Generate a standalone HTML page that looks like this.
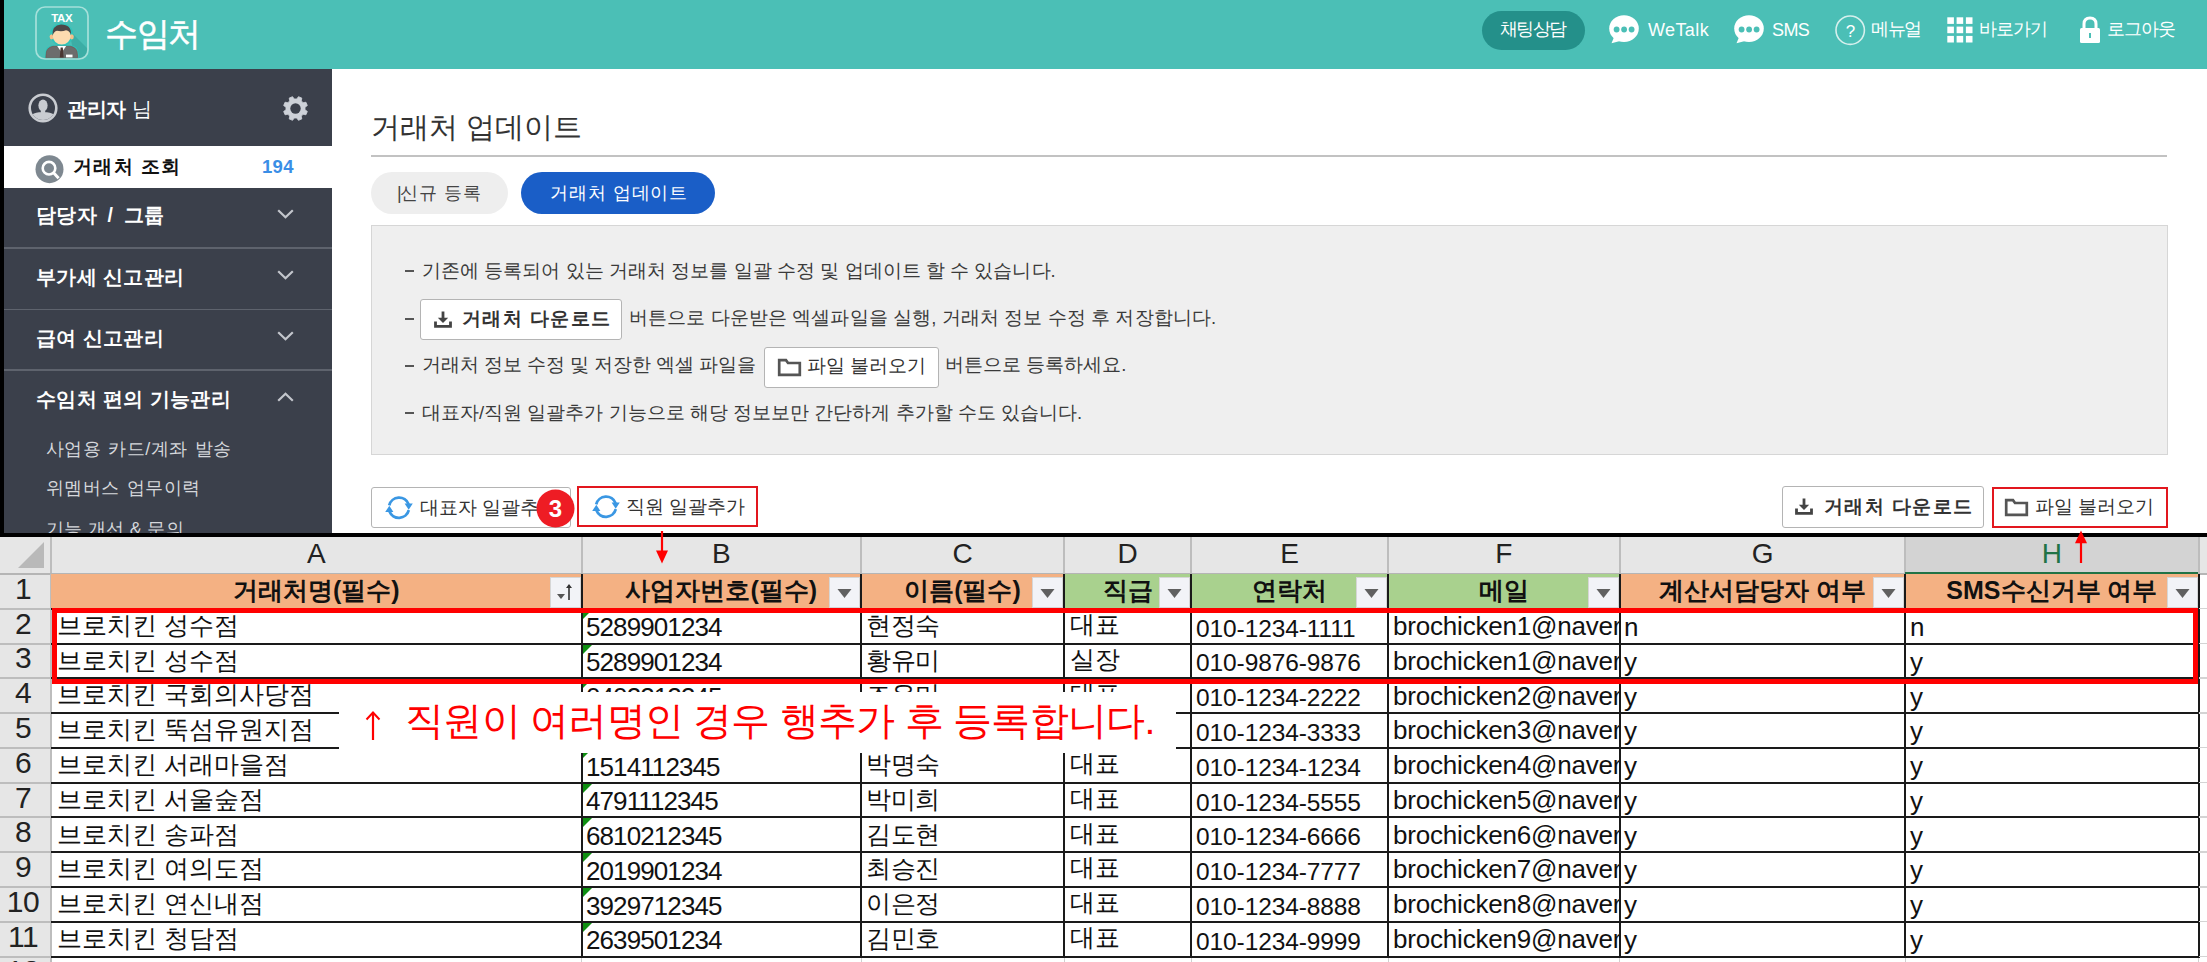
<!DOCTYPE html><html><head><meta charset="utf-8"><style>
html,body{margin:0;padding:0;}
body{width:2207px;height:962px;overflow:hidden;position:relative;background:#fff;font-family:'Liberation Sans', sans-serif;}
.t{position:absolute;white-space:nowrap;}
.b{position:absolute;box-sizing:border-box;}
svg{position:absolute;overflow:visible;}
</style></head><body>
<div class="b" style="left:0px;top:0px;width:4px;height:533px;background:#000"></div>
<div class="b" style="left:4px;top:0px;width:2203px;height:69px;background:#4bbfb6"></div>
<svg style="left:35px;top:6px" width="54" height="54" viewBox="0 0 54 54">
<defs><clipPath id="lc"><rect x="1" y="1" width="52" height="52" rx="9"/></clipPath></defs>
<g clip-path="url(#lc)"><rect x="0" y="0" width="54" height="54" fill="#4bbfb6"/>
<polygon points="34,24 54,44 54,54 40,54" fill="#3cada5"/></g>
<rect x="1" y="1" width="52" height="52" rx="9" fill="none" stroke="#a5e0da" stroke-width="1.7"/>
<text x="26.8" y="16.3" font-family="Liberation Sans" font-weight="bold" font-size="11.5" fill="#fff" text-anchor="middle" letter-spacing="-0.3">TAX</text>
<path d="M9.6,52 L10.5,45 Q11.5,40.5 17,39.2 L36,39.2 Q42,40.5 43,45 L44,52 Z" fill="#30c3ba"/>
<ellipse cx="26.7" cy="28.5" rx="11.6" ry="11.2" fill="#30c3ba"/>
<path d="M10.8,51.6 L11.5,45.5 Q12.5,41.5 18,40.3 L35.5,40.3 Q41,41.5 42,45.5 L42.8,51.6 Z" fill="#6c6c6c" stroke="#7a4a45" stroke-width="0.6"/>
<path d="M22.2,40 L26.7,46.5 L31.2,40 Z" fill="#fff"/>
<path d="M25.6,41.5 L27.8,41.5 L28.6,51.5 L24.8,51.5 Z" fill="#4a3632"/>
<rect x="31" y="48.6" width="6.5" height="2.8" fill="#fff"/>
<ellipse cx="16.6" cy="30.8" rx="2" ry="2.6" fill="#f5c08a"/>
<ellipse cx="36.8" cy="30.8" rx="2" ry="2.6" fill="#f5c08a"/>
<ellipse cx="26.7" cy="30" rx="9" ry="8.6" fill="#fcdbb0"/>
<path d="M17.5,30 Q16.5,19.5 26,18.6 Q36.5,18.5 36,29 Q35,25 31,24.2 Q27,26 22,24.8 Q18.6,25.5 17.5,30 Z" fill="#4d4747"/>
</svg>
<div class="t" style="left:105px;top:17.4px;font-size:33px;line-height:33px;color:#fff;font-weight:normal;letter-spacing:-1.5px;-webkit-text-stroke:0.5px #fff">수임처</div>
<div class="b" style="left:1482px;top:11px;width:103px;height:39px;background:#24908a;border-radius:20px"></div>
<div class="t" style="left:1500px;top:20.9px;font-size:17.5px;line-height:17.5px;color:#fff;font-weight:normal;letter-spacing:-1.6px">채팅상담</div>
<svg style="left:1609px;top:15px" width="31" height="29" viewBox="0 0 31 29">
<ellipse cx="15" cy="13.6" rx="14.8" ry="13.4" fill="#fff"/>
<path d="M5.5,21 L2.5,28.3 L13,25.5 Z" fill="#fff"/>
<circle cx="7.6" cy="14.5" r="2.9" fill="#4bbfb6"/><circle cx="15.1" cy="14.5" r="2.9" fill="#4bbfb6"/><circle cx="22.6" cy="14.5" r="2.9" fill="#4bbfb6"/>
</svg>
<div class="t" style="left:1648px;top:20.7px;font-size:18px;line-height:18px;color:#fbfefe;font-weight:normal;letter-spacing:0.4px">WeTalk</div>
<svg style="left:1734px;top:15px" width="31" height="29" viewBox="0 0 31 29">
<ellipse cx="15" cy="13.6" rx="14.8" ry="13.4" fill="#fff"/>
<path d="M5.5,21 L2.5,28.3 L13,25.5 Z" fill="#fff"/>
<circle cx="7.6" cy="14.5" r="2.9" fill="#4bbfb6"/><circle cx="15.1" cy="14.5" r="2.9" fill="#4bbfb6"/><circle cx="22.6" cy="14.5" r="2.9" fill="#4bbfb6"/>
</svg>
<div class="t" style="left:1772px;top:20.7px;font-size:18px;line-height:18px;color:#fff;font-weight:normal;letter-spacing:-0.6px">SMS</div>
<svg style="left:1835px;top:15px" width="31" height="31" viewBox="0 0 31 31">
<circle cx="15.2" cy="15.2" r="14.2" fill="none" stroke="#d6f0ed" stroke-width="1.6"/>
<text x="15.5" y="21.5" font-family="Liberation Sans" font-size="17" fill="#fff" text-anchor="middle">?</text></svg>
<div class="t" style="left:1871px;top:20.6px;font-size:17.5px;line-height:17.5px;color:#fff;font-weight:normal;letter-spacing:-1.4px">메뉴얼</div>
<svg style="left:1947px;top:17px" width="26" height="26" viewBox="0 0 26 26"><rect x="0.3" y="0.3" width="6.6" height="6.6" fill="#fff"/><rect x="0.3" y="9.6" width="6.6" height="6.6" fill="#fff"/><rect x="0.3" y="18.9" width="6.6" height="6.6" fill="#fff"/><rect x="9.6" y="0.3" width="6.6" height="6.6" fill="#fff"/><rect x="9.6" y="9.6" width="6.6" height="6.6" fill="#fff"/><rect x="9.6" y="18.9" width="6.6" height="6.6" fill="#fff"/><rect x="18.9" y="0.3" width="6.6" height="6.6" fill="#fff"/><rect x="18.9" y="9.6" width="6.6" height="6.6" fill="#fff"/><rect x="18.9" y="18.9" width="6.6" height="6.6" fill="#fff"/></svg>
<div class="t" style="left:1979px;top:20.6px;font-size:17.5px;line-height:17.5px;color:#fff;font-weight:normal;letter-spacing:-0.9px">바로가기</div>
<svg style="left:2079px;top:16px" width="22" height="28" viewBox="0 0 22 28">
<path d="M5,12 L5,8 Q5,2 11,2 Q17,2 17,8 L17,12" fill="none" stroke="#fff" stroke-width="3"/>
<rect x="1" y="12" width="20" height="15" rx="1.5" fill="#fff"/>
<rect x="10" y="17" width="2" height="5" fill="#4bbfb6"/></svg>
<div class="t" style="left:2107px;top:20.6px;font-size:17.5px;line-height:17.5px;color:#fff;font-weight:normal;letter-spacing:-0.9px">로그아웃</div>
<div class="b" style="left:4px;top:69px;width:328px;height:464px;background:#3b404b"></div>
<svg style="left:27px;top:92px" width="32" height="32" viewBox="0 0 32 32">
<circle cx="16" cy="16" r="13.3" fill="none" stroke="#c9ccd1" stroke-width="2.6"/>
<clipPath id="pc"><circle cx="16" cy="16" r="12"/></clipPath>
<g clip-path="url(#pc)"><ellipse cx="16" cy="13.6" rx="4.6" ry="6" fill="#c9ccd1"/><rect x="13.8" y="17" width="4.4" height="4" fill="#c9ccd1"/><path d="M3,32 L3.5,25 Q5,21 12,20.3 L20,20.3 Q27,21 28.5,25 L29,32 Z" fill="#c9ccd1"/></g></svg>
<div class="t" style="left:67px;top:99.4px;font-size:20px;line-height:20px;color:#fff;font-weight:bold;letter-spacing:-0.5px">관리자</div>
<div class="t" style="left:132px;top:99.4px;font-size:20px;line-height:20px;color:#fff;font-weight:normal;">님</div>
<svg style="left:283px;top:95.6px" width="25" height="25" viewBox="0 0 25 25">
<polygon points="13.75,2.98 15.45,0.66 18.78,2.04 18.34,4.88 20.12,6.66 22.96,6.22 24.34,9.55 22.02,11.25 22.02,13.75 24.34,15.45 22.96,18.78 20.12,18.34 18.34,20.12 18.78,22.96 15.45,24.34 13.75,22.02 11.25,22.02 9.55,24.34 6.22,22.96 6.66,20.12 4.88,18.34 2.04,18.78 0.66,15.45 2.98,13.75 2.98,11.25 0.66,9.55 2.04,6.22 4.88,6.66 6.66,4.88 6.22,2.04 9.55,0.66 11.25,2.98" fill="#cdd1d8" stroke="#cdd1d8" stroke-width="0.8" stroke-linejoin="round"/><circle cx="12.5" cy="12.5" r="5.2" fill="#3b404b"/></svg>
<div class="b" style="left:4px;top:146px;width:328px;height:41.5px;background:#fff"></div>
<svg style="left:35px;top:155px" width="29" height="29" viewBox="0 0 29 29">
<circle cx="14.5" cy="14.2" r="14" fill="#7e8890"/>
<circle cx="14" cy="13.2" r="6.3" fill="none" stroke="#fff" stroke-width="2.6"/>
<line x1="18.6" y1="17.8" x2="23.6" y2="23.2" stroke="#fff" stroke-width="3"/></svg>
<div class="t" style="left:73px;top:158.0px;font-size:18.5px;line-height:18.5px;color:#111;font-weight:bold;letter-spacing:1.4px">거래처 조회</div>
<div class="t" style="left:262px;top:158.3px;font-size:18.5px;line-height:18.5px;color:#3a8ee6;font-weight:bold;letter-spacing:0.3px">194</div>
<div class="t" style="left:36px;top:206.4px;font-size:19.5px;line-height:19.5px;color:#fff;font-weight:bold;letter-spacing:0.4px;word-spacing:4.5px">담당자 / 그룹</div>
<svg style="left:277px;top:208.5px" width="17" height="10" viewBox="0 0 17 10"><polyline points="1.2,1.2 8.5,8.3 15.8,1.2" fill="none" stroke="#c3c6cc" stroke-width="2.2"/></svg>
<div class="b" style="left:4px;top:247.4px;width:328px;height:1.1999999999999886px;background:#5e636d"></div>
<div class="t" style="left:36px;top:267.5px;font-size:19.5px;line-height:19.5px;color:#fff;font-weight:bold;letter-spacing:0.4px;word-spacing:0">부가세 신고관리</div>
<svg style="left:277px;top:269.6px" width="17" height="10" viewBox="0 0 17 10"><polyline points="1.2,1.2 8.5,8.3 15.8,1.2" fill="none" stroke="#c3c6cc" stroke-width="2.2"/></svg>
<div class="b" style="left:4px;top:308.6px;width:328px;height:1.1999999999999886px;background:#5e636d"></div>
<div class="t" style="left:36px;top:328.7px;font-size:19.5px;line-height:19.5px;color:#fff;font-weight:bold;letter-spacing:0.4px;word-spacing:0">급여 신고관리</div>
<svg style="left:277px;top:330.8px" width="17" height="10" viewBox="0 0 17 10"><polyline points="1.2,1.2 8.5,8.3 15.8,1.2" fill="none" stroke="#c3c6cc" stroke-width="2.2"/></svg>
<div class="b" style="left:4px;top:369.40000000000003px;width:328px;height:1.1999999999999886px;background:#5e636d"></div>
<div class="t" style="left:36px;top:389.5px;font-size:19.5px;line-height:19.5px;color:#fff;font-weight:bold;letter-spacing:0.4px;word-spacing:0">수임처 편의 기능관리</div>
<svg style="left:277px;top:391.6px" width="17" height="10" viewBox="0 0 17 10"><polyline points="1.2,8.8 8.5,1.7 15.8,8.8" fill="none" stroke="#c3c6cc" stroke-width="2.2"/></svg>
<div class="t" style="left:46px;top:440.3px;font-size:18px;line-height:18px;color:#d6d8dc;font-weight:normal;letter-spacing:0.45px;word-spacing:1.5px">사업용 카드/계좌 발송</div>
<div class="t" style="left:46px;top:479.1px;font-size:18px;line-height:18px;color:#d6d8dc;font-weight:normal;letter-spacing:0.45px;word-spacing:1.5px">위멤버스 업무이력</div>
<div class="t" style="left:46px;top:520.1px;font-size:18px;line-height:18px;color:#d6d8dc;font-weight:normal;letter-spacing:0.3px;word-spacing:0px">기능 개선 &amp; 문의</div>
<div class="b" style="left:4px;top:533px;width:328px;height:4px;background:#000"></div>
<div class="t" style="left:370.5px;top:112.7px;font-size:29px;line-height:29px;color:#333;font-weight:normal;letter-spacing:0px">거래처 업데이트</div>
<div class="b" style="left:371px;top:154.6px;width:1796px;height:2.200000000000017px;background:#c2c2c2"></div>
<div class="b" style="left:371px;top:172px;width:137px;height:42px;background:#eeeeee;border-radius:21px"></div>
<div class="t" style="left:397px;top:183.6px;font-size:18px;line-height:18px;color:#444;font-weight:normal;letter-spacing:1px"><span style="font-weight:normal;letter-spacing:-2px">|</span>신규 등록</div>
<div class="b" style="left:521px;top:172px;width:194px;height:42px;background:#1a5ec7;border-radius:21px"></div>
<div class="t" style="left:550px;top:183.6px;font-size:18px;line-height:18px;color:#fff;font-weight:normal;letter-spacing:0.9px">거래처 업데이트</div>
<div class="b" style="left:371px;top:225px;width:1796.5px;height:230px;background:#efefef;border:1.5px solid #d6d6d6"></div>
<div class="t" style="left:405px;top:261.5px;font-size:18.5px;line-height:18.5px;color:#3a3a3a;font-weight:normal;letter-spacing:0.05px"><span style="margin-left:17px"></span>기존에 등록되어 있는 거래처 정보를 일괄 수정 및 업데이트 할 수 있습니다.</div>
<div class="b" style="left:405px;top:270px;width:8.5px;height:2px;background:#555"></div>
<div class="b" style="left:405px;top:318px;width:8.5px;height:2px;background:#555"></div>
<div class="b" style="left:405px;top:365px;width:8.5px;height:2px;background:#555"></div>
<div class="b" style="left:405px;top:412px;width:8.5px;height:2px;background:#555"></div>
<div class="b" style="left:420px;top:298.7px;width:202px;height:41.60000000000002px;background:#fff;border:1.6px solid #b4b4b4;border-radius:3px"></div>
<svg style="left:434px;top:311px" width="18" height="17" viewBox="0 0 18 17">
<line x1="9" y1="0.5" x2="9" y2="8" stroke="#444" stroke-width="2.8"/>
<polygon points="3.8,6.8 14.2,6.8 9,12" fill="#444"/>
<polyline points="1.5,10.5 1.5,15.3 16.5,15.3 16.5,10.5" fill="none" stroke="#444" stroke-width="2.8"/></svg>
<div class="t" style="left:462px;top:309.0px;font-size:19px;line-height:19px;color:#333;font-weight:bold;letter-spacing:1.4px">거래처 다운로드</div>
<div class="t" style="left:629px;top:309.0px;font-size:18.5px;line-height:18.5px;color:#3a3a3a;font-weight:normal;letter-spacing:0.1px">버튼으로 다운받은 엑셀파일을 실행, 거래처 정보 수정 후 저장합니다.</div>
<div class="t" style="left:405px;top:356.0px;font-size:18.5px;line-height:18.5px;color:#3a3a3a;font-weight:normal;letter-spacing:-0.05px"><span style="margin-left:17px"></span>거래처 정보 수정 및 저장한 엑셀 파일을</div>
<div class="b" style="left:763.7px;top:347.2px;width:175.29999999999995px;height:41.19999999999999px;background:#fff;border:1.6px solid #b4b4b4;border-radius:3px"></div>
<svg style="left:778px;top:359px" width="23" height="17" viewBox="0 0 23 17">
<path d="M1.2,15.8 L1.2,1.2 L8,1.2 L10,4 L21.8,4 L21.8,15.8 Z" fill="none" stroke="#555" stroke-width="2.7"/>
<line x1="1.2" y1="6.2" x2="21.8" y2="6.2" stroke="#555" stroke-width="0"/></svg>
<div class="t" style="left:807px;top:357.0px;font-size:18.5px;line-height:18.5px;color:#333;font-weight:normal;">파일 불러오기</div>
<div class="t" style="left:945px;top:356.0px;font-size:18.5px;line-height:18.5px;color:#3a3a3a;font-weight:normal;">버튼으로 등록하세요.</div>
<div class="t" style="left:405px;top:403.5px;font-size:18.5px;line-height:18.5px;color:#3a3a3a;font-weight:normal;letter-spacing:0.02px"><span style="margin-left:17px"></span>대표자/직원 일괄추가 기능으로 해당 정보보만 간단하게 추가할 수도 있습니다.</div>
<div class="b" style="left:371.4px;top:487px;width:199.39999999999998px;height:41px;background:#fff;border:1.6px solid #b4b4b4;border-radius:3px"></div>
<svg style="left:385px;top:495px" width="28" height="26" viewBox="0 0 28 26">
<path d="M4.2,10.3 A10.2,10.2 0 0 1 23.6,9.2" fill="none" stroke="#3a97e3" stroke-width="2.8"/>
<polygon points="19.6,8.6 27.8,8.6 23.7,14.8" fill="#3a97e3"/>
<path d="M23.8,15.2 A10.2,10.2 0 0 1 4.4,16.3" fill="none" stroke="#3a97e3" stroke-width="2.8"/>
<polygon points="0.2,17 8.4,17 4.3,10.8" fill="#3a97e3"/></svg>
<div class="t" style="left:420px;top:498.5px;font-size:18.5px;line-height:18.5px;color:#333;font-weight:normal;">대표자 일괄추가</div>
<div class="b" style="left:577.4px;top:486px;width:181.0px;height:40.700000000000045px;background:#fff;border:2px solid #e2171e"></div>
<svg style="left:592px;top:494px" width="28" height="26" viewBox="0 0 28 26">
<path d="M4.2,10.3 A10.2,10.2 0 0 1 23.6,9.2" fill="none" stroke="#3a97e3" stroke-width="2.8"/>
<polygon points="19.6,8.6 27.8,8.6 23.7,14.8" fill="#3a97e3"/>
<path d="M23.8,15.2 A10.2,10.2 0 0 1 4.4,16.3" fill="none" stroke="#3a97e3" stroke-width="2.8"/>
<polygon points="0.2,17 8.4,17 4.3,10.8" fill="#3a97e3"/></svg>
<div class="t" style="left:626px;top:498.2px;font-size:18.5px;line-height:18.5px;color:#333;font-weight:normal;">직원 일괄추가</div>
<svg style="left:535.5px;top:489px" width="39" height="39" viewBox="0 0 39 39">
<circle cx="19.5" cy="19.5" r="19" fill="#ee1c24"/>
<text x="19.5" y="28.3" font-family="Liberation Sans" font-weight="bold" font-size="24" fill="#fff" text-anchor="middle">3</text></svg>
<div class="b" style="left:1782.2px;top:486px;width:202.0999999999999px;height:41.700000000000045px;background:#fff;border:1.6px solid #b4b4b4;border-radius:3px"></div>
<svg style="left:1795px;top:498px" width="18" height="17" viewBox="0 0 18 17">
<line x1="9" y1="0.5" x2="9" y2="8" stroke="#444" stroke-width="2.8"/>
<polygon points="3.8,6.8 14.2,6.8 9,12" fill="#444"/>
<polyline points="1.5,10.5 1.5,15.3 16.5,15.3 16.5,10.5" fill="none" stroke="#444" stroke-width="2.8"/></svg>
<div class="t" style="left:1824px;top:497.0px;font-size:19px;line-height:19px;color:#333;font-weight:bold;letter-spacing:1.4px">거래처 다운로드</div>
<div class="b" style="left:1991.6px;top:486.9px;width:176.80000000000018px;height:40.80000000000007px;background:#fff;border:2px solid #e2171e"></div>
<svg style="left:2005px;top:499px" width="23" height="17" viewBox="0 0 23 17">
<path d="M1.2,15.8 L1.2,1.2 L8,1.2 L10,4 L21.8,4 L21.8,15.8 Z" fill="none" stroke="#555" stroke-width="2.7"/>
<line x1="1.2" y1="6.2" x2="21.8" y2="6.2" stroke="#555" stroke-width="0"/></svg>
<div class="t" style="left:2035px;top:498.0px;font-size:18.5px;line-height:18.5px;color:#333;font-weight:normal;">파일 불러오기</div>
<div class="b" style="left:0px;top:533px;width:2207px;height:4px;background:#000"></div>
<div class="b" style="left:0px;top:537px;width:2207px;height:425px;background:#fff"></div>
<div class="b" style="left:0px;top:537px;width:2207px;height:37px;background:#e6e6e6"></div>
<div class="b" style="left:0px;top:574px;width:51px;height:388px;background:#e6e6e6"></div>
<div class="b" style="left:1905.3px;top:537px;width:293.20000000000005px;height:37px;background:#d3d3d3"></div>
<div class="b" style="left:50px;top:537px;width:2px;height:37px;background:#bdbdbd"></div>
<div class="b" style="left:580.6px;top:537px;width:2.0px;height:37px;background:#bdbdbd"></div>
<div class="b" style="left:860px;top:537px;width:2px;height:37px;background:#bdbdbd"></div>
<div class="b" style="left:1063px;top:537px;width:2px;height:37px;background:#bdbdbd"></div>
<div class="b" style="left:1190.3px;top:537px;width:2.0px;height:37px;background:#bdbdbd"></div>
<div class="b" style="left:1387px;top:537px;width:2px;height:37px;background:#bdbdbd"></div>
<div class="b" style="left:1618.8px;top:537px;width:2.0px;height:37px;background:#bdbdbd"></div>
<div class="b" style="left:1904.3px;top:537px;width:2.0px;height:37px;background:#bdbdbd"></div>
<div class="b" style="left:2197.5px;top:537px;width:2.0px;height:37px;background:#bdbdbd"></div>
<div class="b" style="left:0px;top:572.5px;width:2207px;height:2.0px;background:#b5b5b5"></div>
<div class="b" style="left:1905.3px;top:571.5px;width:293.20000000000005px;height:3.0px;background:#217346"></div>
<div class="b" style="left:0px;top:607.78px;width:51px;height:2.0px;background:#bdbdbd"></div>
<div class="b" style="left:0px;top:642.56px;width:51px;height:2.0px;background:#bdbdbd"></div>
<div class="b" style="left:0px;top:677.34px;width:51px;height:2.0px;background:#bdbdbd"></div>
<div class="b" style="left:0px;top:712.12px;width:51px;height:2.0px;background:#bdbdbd"></div>
<div class="b" style="left:0px;top:746.9px;width:51px;height:2.0px;background:#bdbdbd"></div>
<div class="b" style="left:0px;top:781.6800000000001px;width:51px;height:2.0px;background:#bdbdbd"></div>
<div class="b" style="left:0px;top:816.46px;width:51px;height:2.0px;background:#bdbdbd"></div>
<div class="b" style="left:0px;top:851.24px;width:51px;height:2.0px;background:#bdbdbd"></div>
<div class="b" style="left:0px;top:886.02px;width:51px;height:2.0px;background:#bdbdbd"></div>
<div class="b" style="left:0px;top:920.8px;width:51px;height:2.0px;background:#bdbdbd"></div>
<div class="b" style="left:0px;top:955.58px;width:51px;height:2.0px;background:#bdbdbd"></div>
<div class="b" style="left:49.5px;top:574px;width:2.0px;height:388px;background:#bdbdbd"></div>
<svg style="left:18px;top:542px" width="27" height="27" viewBox="0 0 27 27"><polygon points="26,0 26,26 0,26" fill="#b9b9b9"/></svg>
<div class="t" style="left:286.3px;width:60px;text-align:center;top:539.7px;font-size:28px;line-height:28px;color:#222">A</div>
<div class="t" style="left:691.3px;width:60px;text-align:center;top:539.7px;font-size:28px;line-height:28px;color:#222">B</div>
<div class="t" style="left:932.5px;width:60px;text-align:center;top:539.7px;font-size:28px;line-height:28px;color:#222">C</div>
<div class="t" style="left:1097.65px;width:60px;text-align:center;top:539.7px;font-size:28px;line-height:28px;color:#222">D</div>
<div class="t" style="left:1259.65px;width:60px;text-align:center;top:539.7px;font-size:28px;line-height:28px;color:#222">E</div>
<div class="t" style="left:1473.9px;width:60px;text-align:center;top:539.7px;font-size:28px;line-height:28px;color:#222">F</div>
<div class="t" style="left:1732.55px;width:60px;text-align:center;top:539.7px;font-size:28px;line-height:28px;color:#222">G</div>
<div class="t" style="left:2021.9px;width:60px;text-align:center;top:539.7px;font-size:28px;line-height:28px;color:#217346">H</div>
<div class="t" style="left:0;width:50px;text-align:center;top:573.8px;font-size:30px;line-height:30px;color:#222;letter-spacing:-0.5px;text-indent:-4px">1</div>
<div class="t" style="left:0;width:50px;text-align:center;top:608.6px;font-size:30px;line-height:30px;color:#222;letter-spacing:-0.5px;text-indent:-4px">2</div>
<div class="t" style="left:0;width:50px;text-align:center;top:643.4px;font-size:30px;line-height:30px;color:#222;letter-spacing:-0.5px;text-indent:-4px">3</div>
<div class="t" style="left:0;width:50px;text-align:center;top:678.1px;font-size:30px;line-height:30px;color:#222;letter-spacing:-0.5px;text-indent:-4px">4</div>
<div class="t" style="left:0;width:50px;text-align:center;top:712.9px;font-size:30px;line-height:30px;color:#222;letter-spacing:-0.5px;text-indent:-4px">5</div>
<div class="t" style="left:0;width:50px;text-align:center;top:747.7px;font-size:30px;line-height:30px;color:#222;letter-spacing:-0.5px;text-indent:-4px">6</div>
<div class="t" style="left:0;width:50px;text-align:center;top:782.5px;font-size:30px;line-height:30px;color:#222;letter-spacing:-0.5px;text-indent:-4px">7</div>
<div class="t" style="left:0;width:50px;text-align:center;top:817.2px;font-size:30px;line-height:30px;color:#222;letter-spacing:-0.5px;text-indent:-4px">8</div>
<div class="t" style="left:0;width:50px;text-align:center;top:852.0px;font-size:30px;line-height:30px;color:#222;letter-spacing:-0.5px;text-indent:-4px">9</div>
<div class="t" style="left:0;width:50px;text-align:center;top:886.8px;font-size:30px;line-height:30px;color:#222;letter-spacing:-0.5px;text-indent:-4px">10</div>
<div class="t" style="left:0;width:50px;text-align:center;top:921.6px;font-size:30px;line-height:30px;color:#222;letter-spacing:-0.5px;text-indent:-4px">11</div>
<div class="t" style="left:0;width:50px;text-align:center;top:956.4px;font-size:30px;line-height:30px;color:#222;letter-spacing:-0.5px;text-indent:-4px">12</div>
<div class="b" style="left:51px;top:574px;width:530.6px;height:34.77999999999997px;background:#f4b183"></div>
<div class="b" style="left:581.6px;top:574px;width:279.4px;height:34.77999999999997px;background:#f4b183"></div>
<div class="b" style="left:861px;top:574px;width:203px;height:34.77999999999997px;background:#f4b183"></div>
<div class="b" style="left:1064px;top:574px;width:127.29999999999995px;height:34.77999999999997px;background:#a9d18e"></div>
<div class="b" style="left:1191.3px;top:574px;width:196.70000000000005px;height:34.77999999999997px;background:#a9d18e"></div>
<div class="b" style="left:1388px;top:574px;width:231.79999999999995px;height:34.77999999999997px;background:#a9d18e"></div>
<div class="b" style="left:1619.8px;top:574px;width:285.5px;height:34.77999999999997px;background:#f4b183"></div>
<div class="b" style="left:1905.3px;top:574px;width:293.20000000000005px;height:34.77999999999997px;background:#f4b183"></div>
<div class="b" style="left:51px;top:607.78px;width:2147.5px;height:2.0px;background:#1a1a1a"></div>
<div class="b" style="left:51px;top:642.56px;width:2147.5px;height:2.0px;background:#1a1a1a"></div>
<div class="b" style="left:51px;top:677.34px;width:2147.5px;height:2.0px;background:#1a1a1a"></div>
<div class="b" style="left:51px;top:712.12px;width:2147.5px;height:2.0px;background:#1a1a1a"></div>
<div class="b" style="left:51px;top:746.9px;width:2147.5px;height:2.0px;background:#1a1a1a"></div>
<div class="b" style="left:51px;top:781.6800000000001px;width:2147.5px;height:2.0px;background:#1a1a1a"></div>
<div class="b" style="left:51px;top:816.46px;width:2147.5px;height:2.0px;background:#1a1a1a"></div>
<div class="b" style="left:51px;top:851.24px;width:2147.5px;height:2.0px;background:#1a1a1a"></div>
<div class="b" style="left:51px;top:886.02px;width:2147.5px;height:2.0px;background:#1a1a1a"></div>
<div class="b" style="left:51px;top:920.8px;width:2147.5px;height:2.0px;background:#1a1a1a"></div>
<div class="b" style="left:51px;top:955.58px;width:2147.5px;height:2.0px;background:#1a1a1a"></div>
<div class="b" style="left:580.6px;top:574px;width:2.0px;height:383.58000000000004px;background:#1a1a1a"></div>
<div class="b" style="left:581.1px;top:957.58px;width:1.0px;height:4.419999999999959px;background:#d0d0d0"></div>
<div class="b" style="left:860px;top:574px;width:2px;height:383.58000000000004px;background:#1a1a1a"></div>
<div class="b" style="left:860.5px;top:957.58px;width:1.0px;height:4.419999999999959px;background:#d0d0d0"></div>
<div class="b" style="left:1063px;top:574px;width:2px;height:383.58000000000004px;background:#1a1a1a"></div>
<div class="b" style="left:1063.5px;top:957.58px;width:1.0px;height:4.419999999999959px;background:#d0d0d0"></div>
<div class="b" style="left:1190.3px;top:574px;width:2.0px;height:383.58000000000004px;background:#1a1a1a"></div>
<div class="b" style="left:1190.8px;top:957.58px;width:1.0px;height:4.419999999999959px;background:#d0d0d0"></div>
<div class="b" style="left:1387px;top:574px;width:2px;height:383.58000000000004px;background:#1a1a1a"></div>
<div class="b" style="left:1387.5px;top:957.58px;width:1.0px;height:4.419999999999959px;background:#d0d0d0"></div>
<div class="b" style="left:1618.8px;top:574px;width:2.0px;height:383.58000000000004px;background:#1a1a1a"></div>
<div class="b" style="left:1619.3px;top:957.58px;width:1.0px;height:4.419999999999959px;background:#d0d0d0"></div>
<div class="b" style="left:1904.3px;top:574px;width:2.0px;height:383.58000000000004px;background:#1a1a1a"></div>
<div class="b" style="left:1904.8px;top:957.58px;width:1.0px;height:4.419999999999959px;background:#d0d0d0"></div>
<div class="b" style="left:2197.5px;top:574px;width:2.0px;height:383.58000000000004px;background:#1a1a1a"></div>
<div class="b" style="left:2198.0px;top:957.58px;width:1.0px;height:4.419999999999959px;background:#d0d0d0"></div>
<div class="b" style="left:549.6px;top:576.6px;width:31.0px;height:30.979999999999905px;background:#f2f3f7;border:1px solid #d6d6d6"></div>
<svg style="left:549.6px;top:576.6px" width="31" height="31" viewBox="0 0 31 31"><polygon points="7,17 15,17 11,22" fill="#555"/><line x1="19" y1="8" x2="19" y2="23" stroke="#333" stroke-width="1.6"/><polygon points="16,11 22,11 19,7" fill="#333"/></svg>
<div class="b" style="left:829px;top:576.6px;width:31px;height:30.979999999999905px;background:#f2f3f7;border:1px solid #d6d6d6"></div>
<svg style="left:829px;top:576.6px" width="31" height="31" viewBox="0 0 31 31"><polygon points="8.5,12 22.5,12 15.5,21" fill="#606060"/></svg>
<div class="b" style="left:1032px;top:576.6px;width:31px;height:30.979999999999905px;background:#f2f3f7;border:1px solid #d6d6d6"></div>
<svg style="left:1032px;top:576.6px" width="31" height="31" viewBox="0 0 31 31"><polygon points="8.5,12 22.5,12 15.5,21" fill="#606060"/></svg>
<div class="b" style="left:1159.3px;top:576.6px;width:31.0px;height:30.979999999999905px;background:#f2f3f7;border:1px solid #d6d6d6"></div>
<svg style="left:1159.3px;top:576.6px" width="31" height="31" viewBox="0 0 31 31"><polygon points="8.5,12 22.5,12 15.5,21" fill="#606060"/></svg>
<div class="b" style="left:1356px;top:576.6px;width:31px;height:30.979999999999905px;background:#f2f3f7;border:1px solid #d6d6d6"></div>
<svg style="left:1356px;top:576.6px" width="31" height="31" viewBox="0 0 31 31"><polygon points="8.5,12 22.5,12 15.5,21" fill="#606060"/></svg>
<div class="b" style="left:1587.8px;top:576.6px;width:31.0px;height:30.979999999999905px;background:#f2f3f7;border:1px solid #d6d6d6"></div>
<svg style="left:1587.8px;top:576.6px" width="31" height="31" viewBox="0 0 31 31"><polygon points="8.5,12 22.5,12 15.5,21" fill="#606060"/></svg>
<div class="b" style="left:1873.3px;top:576.6px;width:31.0px;height:30.979999999999905px;background:#f2f3f7;border:1px solid #d6d6d6"></div>
<svg style="left:1873.3px;top:576.6px" width="31" height="31" viewBox="0 0 31 31"><polygon points="8.5,12 22.5,12 15.5,21" fill="#606060"/></svg>
<div class="b" style="left:2166.5px;top:576.6px;width:31.0px;height:30.979999999999905px;background:#f2f3f7;border:1px solid #d6d6d6"></div>
<svg style="left:2166.5px;top:576.6px" width="31" height="31" viewBox="0 0 31 31"><polygon points="8.5,12 22.5,12 15.5,21" fill="#606060"/></svg>
<div class="t" style="left:116.30000000000001px;width:400px;text-align:center;top:578.0px;font-size:25px;line-height:25px;color:#111;font-weight:bold">거래처명(필수)</div>
<div class="t" style="left:521.3px;width:400px;text-align:center;top:578.0px;font-size:25px;line-height:25px;color:#111;font-weight:bold">사업자번호(필수)</div>
<div class="t" style="left:762.5px;width:400px;text-align:center;top:578.0px;font-size:25px;line-height:25px;color:#111;font-weight:bold">이름(필수)</div>
<div class="t" style="left:927.6500000000001px;width:400px;text-align:center;top:578.0px;font-size:25px;line-height:25px;color:#111;font-weight:bold">직급</div>
<div class="t" style="left:1089.65px;width:400px;text-align:center;top:578.0px;font-size:25px;line-height:25px;color:#111;font-weight:bold">연락처</div>
<div class="t" style="left:1303.9px;width:400px;text-align:center;top:578.0px;font-size:25px;line-height:25px;color:#111;font-weight:bold">메일</div>
<div class="t" style="left:1562.55px;width:400px;text-align:center;top:578.0px;font-size:25px;line-height:25px;color:#111;font-weight:bold">계산서담당자 여부</div>
<div class="t" style="left:1851.9px;width:400px;text-align:center;top:578.0px;font-size:25px;line-height:25px;color:#111;font-weight:bold">SMS수신거부 여부</div>
<div class="t" style="left:57px;top:612.8px;font-size:25px;line-height:25px;color:#111;font-weight:normal;">브로치킨 성수점</div>
<svg style="left:582.6px;top:609.78px" width="10" height="10" viewBox="0 0 10 10"><polygon points="0,0 9,0 0,9" fill="#0f8f12"/></svg>
<div class="t" style="left:586px;top:614.4px;font-size:26px;line-height:26px;color:#111;font-weight:normal;letter-spacing:-0.9px">5289901234</div>
<div class="t" style="left:866px;top:612.8px;font-size:25px;line-height:25px;color:#111;font-weight:normal;letter-spacing:-0.5px">현정숙</div>
<div class="t" style="left:1070px;top:611.8px;font-size:25px;line-height:25px;color:#111;font-weight:normal;">대표</div>
<div class="t" style="left:1196px;top:616.6px;font-size:24.5px;line-height:24.5px;color:#111;font-weight:normal;letter-spacing:-0.1px">010-1234-1111</div>
<div class="t" style="left:1386px;width:232.79999999999995px;overflow:hidden;top:610.9px;font-size:26px;line-height:30px;color:#111;letter-spacing:-0.2px">&nbsp;brochicken1@naver</div>
<div class="t" style="left:1624px;top:613.9px;font-size:26px;line-height:26px;color:#111;font-weight:normal;">n</div>
<div class="t" style="left:1910px;top:613.9px;font-size:26px;line-height:26px;color:#111;font-weight:normal;">n</div>
<div class="t" style="left:57px;top:647.6px;font-size:25px;line-height:25px;color:#111;font-weight:normal;">브로치킨 성수점</div>
<svg style="left:582.6px;top:644.56px" width="10" height="10" viewBox="0 0 10 10"><polygon points="0,0 9,0 0,9" fill="#0f8f12"/></svg>
<div class="t" style="left:586px;top:649.2px;font-size:26px;line-height:26px;color:#111;font-weight:normal;letter-spacing:-0.9px">5289901234</div>
<div class="t" style="left:866px;top:647.6px;font-size:25px;line-height:25px;color:#111;font-weight:normal;letter-spacing:-0.5px">황유미</div>
<div class="t" style="left:1070px;top:646.6px;font-size:25px;line-height:25px;color:#111;font-weight:normal;">실장</div>
<div class="t" style="left:1196px;top:651.4px;font-size:24.5px;line-height:24.5px;color:#111;font-weight:normal;letter-spacing:-0.1px">010-9876-9876</div>
<div class="t" style="left:1386px;width:232.79999999999995px;overflow:hidden;top:645.7px;font-size:26px;line-height:30px;color:#111;letter-spacing:-0.2px">&nbsp;brochicken1@naver</div>
<div class="t" style="left:1624px;top:648.7px;font-size:26px;line-height:26px;color:#111;font-weight:normal;">y</div>
<div class="t" style="left:1910px;top:648.7px;font-size:26px;line-height:26px;color:#111;font-weight:normal;">y</div>
<div class="t" style="left:57px;top:682.3px;font-size:25px;line-height:25px;color:#111;font-weight:normal;">브로치킨 국회의사당점</div>
<svg style="left:582.6px;top:679.34px" width="10" height="10" viewBox="0 0 10 10"><polygon points="0,0 9,0 0,9" fill="#0f8f12"/></svg>
<div class="t" style="left:586px;top:684.0px;font-size:26px;line-height:26px;color:#111;font-weight:normal;letter-spacing:-0.9px">0402212345</div>
<div class="t" style="left:866px;top:682.3px;font-size:25px;line-height:25px;color:#111;font-weight:normal;letter-spacing:-0.5px">조유미</div>
<div class="t" style="left:1070px;top:681.3px;font-size:25px;line-height:25px;color:#111;font-weight:normal;">대표</div>
<div class="t" style="left:1196px;top:686.2px;font-size:24.5px;line-height:24.5px;color:#111;font-weight:normal;letter-spacing:-0.1px">010-1234-2222</div>
<div class="t" style="left:1386px;width:232.79999999999995px;overflow:hidden;top:680.5px;font-size:26px;line-height:30px;color:#111;letter-spacing:-0.2px">&nbsp;brochicken2@naver</div>
<div class="t" style="left:1624px;top:683.5px;font-size:26px;line-height:26px;color:#111;font-weight:normal;">y</div>
<div class="t" style="left:1910px;top:683.5px;font-size:26px;line-height:26px;color:#111;font-weight:normal;">y</div>
<div class="t" style="left:57px;top:717.1px;font-size:25px;line-height:25px;color:#111;font-weight:normal;">브로치킨 뚝섬유원지점</div>
<svg style="left:582.6px;top:714.12px" width="10" height="10" viewBox="0 0 10 10"><polygon points="0,0 9,0 0,9" fill="#0f8f12"/></svg>
<div class="t" style="left:586px;top:718.7px;font-size:26px;line-height:26px;color:#111;font-weight:normal;letter-spacing:-0.9px">1234512345</div>
<div class="t" style="left:866px;top:717.1px;font-size:25px;line-height:25px;color:#111;font-weight:normal;letter-spacing:-0.5px">김영희</div>
<div class="t" style="left:1070px;top:716.1px;font-size:25px;line-height:25px;color:#111;font-weight:normal;">대표</div>
<div class="t" style="left:1196px;top:720.9px;font-size:24.5px;line-height:24.5px;color:#111;font-weight:normal;letter-spacing:-0.1px">010-1234-3333</div>
<div class="t" style="left:1386px;width:232.79999999999995px;overflow:hidden;top:715.2px;font-size:26px;line-height:30px;color:#111;letter-spacing:-0.2px">&nbsp;brochicken3@naver</div>
<div class="t" style="left:1624px;top:718.2px;font-size:26px;line-height:26px;color:#111;font-weight:normal;">y</div>
<div class="t" style="left:1910px;top:718.2px;font-size:26px;line-height:26px;color:#111;font-weight:normal;">y</div>
<div class="t" style="left:57px;top:751.9px;font-size:25px;line-height:25px;color:#111;font-weight:normal;">브로치킨 서래마을점</div>
<svg style="left:582.6px;top:748.9px" width="10" height="10" viewBox="0 0 10 10"><polygon points="0,0 9,0 0,9" fill="#0f8f12"/></svg>
<div class="t" style="left:586px;top:753.5px;font-size:26px;line-height:26px;color:#111;font-weight:normal;letter-spacing:-0.9px">1514112345</div>
<div class="t" style="left:866px;top:751.9px;font-size:25px;line-height:25px;color:#111;font-weight:normal;letter-spacing:-0.5px">박명숙</div>
<div class="t" style="left:1070px;top:750.9px;font-size:25px;line-height:25px;color:#111;font-weight:normal;">대표</div>
<div class="t" style="left:1196px;top:755.7px;font-size:24.5px;line-height:24.5px;color:#111;font-weight:normal;letter-spacing:-0.1px">010-1234-1234</div>
<div class="t" style="left:1386px;width:232.79999999999995px;overflow:hidden;top:750.0px;font-size:26px;line-height:30px;color:#111;letter-spacing:-0.2px">&nbsp;brochicken4@naver</div>
<div class="t" style="left:1624px;top:753.0px;font-size:26px;line-height:26px;color:#111;font-weight:normal;">y</div>
<div class="t" style="left:1910px;top:753.0px;font-size:26px;line-height:26px;color:#111;font-weight:normal;">y</div>
<div class="t" style="left:57px;top:786.7px;font-size:25px;line-height:25px;color:#111;font-weight:normal;">브로치킨 서울숲점</div>
<svg style="left:582.6px;top:783.6800000000001px" width="10" height="10" viewBox="0 0 10 10"><polygon points="0,0 9,0 0,9" fill="#0f8f12"/></svg>
<div class="t" style="left:586px;top:788.3px;font-size:26px;line-height:26px;color:#111;font-weight:normal;letter-spacing:-0.9px">4791112345</div>
<div class="t" style="left:866px;top:786.7px;font-size:25px;line-height:25px;color:#111;font-weight:normal;letter-spacing:-0.5px">박미희</div>
<div class="t" style="left:1070px;top:785.7px;font-size:25px;line-height:25px;color:#111;font-weight:normal;">대표</div>
<div class="t" style="left:1196px;top:790.5px;font-size:24.5px;line-height:24.5px;color:#111;font-weight:normal;letter-spacing:-0.1px">010-1234-5555</div>
<div class="t" style="left:1386px;width:232.79999999999995px;overflow:hidden;top:784.8px;font-size:26px;line-height:30px;color:#111;letter-spacing:-0.2px">&nbsp;brochicken5@naver</div>
<div class="t" style="left:1624px;top:787.8px;font-size:26px;line-height:26px;color:#111;font-weight:normal;">y</div>
<div class="t" style="left:1910px;top:787.8px;font-size:26px;line-height:26px;color:#111;font-weight:normal;">y</div>
<div class="t" style="left:57px;top:821.5px;font-size:25px;line-height:25px;color:#111;font-weight:normal;">브로치킨 송파점</div>
<svg style="left:582.6px;top:818.46px" width="10" height="10" viewBox="0 0 10 10"><polygon points="0,0 9,0 0,9" fill="#0f8f12"/></svg>
<div class="t" style="left:586px;top:823.1px;font-size:26px;line-height:26px;color:#111;font-weight:normal;letter-spacing:-0.9px">6810212345</div>
<div class="t" style="left:866px;top:821.5px;font-size:25px;line-height:25px;color:#111;font-weight:normal;letter-spacing:-0.5px">김도현</div>
<div class="t" style="left:1070px;top:820.5px;font-size:25px;line-height:25px;color:#111;font-weight:normal;">대표</div>
<div class="t" style="left:1196px;top:825.3px;font-size:24.5px;line-height:24.5px;color:#111;font-weight:normal;letter-spacing:-0.1px">010-1234-6666</div>
<div class="t" style="left:1386px;width:232.79999999999995px;overflow:hidden;top:819.6px;font-size:26px;line-height:30px;color:#111;letter-spacing:-0.2px">&nbsp;brochicken6@naver</div>
<div class="t" style="left:1624px;top:822.6px;font-size:26px;line-height:26px;color:#111;font-weight:normal;">y</div>
<div class="t" style="left:1910px;top:822.6px;font-size:26px;line-height:26px;color:#111;font-weight:normal;">y</div>
<div class="t" style="left:57px;top:856.2px;font-size:25px;line-height:25px;color:#111;font-weight:normal;">브로치킨 여의도점</div>
<svg style="left:582.6px;top:853.24px" width="10" height="10" viewBox="0 0 10 10"><polygon points="0,0 9,0 0,9" fill="#0f8f12"/></svg>
<div class="t" style="left:586px;top:857.9px;font-size:26px;line-height:26px;color:#111;font-weight:normal;letter-spacing:-0.9px">2019901234</div>
<div class="t" style="left:866px;top:856.2px;font-size:25px;line-height:25px;color:#111;font-weight:normal;letter-spacing:-0.5px">최승진</div>
<div class="t" style="left:1070px;top:855.2px;font-size:25px;line-height:25px;color:#111;font-weight:normal;">대표</div>
<div class="t" style="left:1196px;top:860.1px;font-size:24.5px;line-height:24.5px;color:#111;font-weight:normal;letter-spacing:-0.1px">010-1234-7777</div>
<div class="t" style="left:1386px;width:232.79999999999995px;overflow:hidden;top:854.4px;font-size:26px;line-height:30px;color:#111;letter-spacing:-0.2px">&nbsp;brochicken7@naver</div>
<div class="t" style="left:1624px;top:857.4px;font-size:26px;line-height:26px;color:#111;font-weight:normal;">y</div>
<div class="t" style="left:1910px;top:857.4px;font-size:26px;line-height:26px;color:#111;font-weight:normal;">y</div>
<div class="t" style="left:57px;top:891.0px;font-size:25px;line-height:25px;color:#111;font-weight:normal;">브로치킨 연신내점</div>
<svg style="left:582.6px;top:888.02px" width="10" height="10" viewBox="0 0 10 10"><polygon points="0,0 9,0 0,9" fill="#0f8f12"/></svg>
<div class="t" style="left:586px;top:892.6px;font-size:26px;line-height:26px;color:#111;font-weight:normal;letter-spacing:-0.9px">3929712345</div>
<div class="t" style="left:866px;top:891.0px;font-size:25px;line-height:25px;color:#111;font-weight:normal;letter-spacing:-0.5px">이은정</div>
<div class="t" style="left:1070px;top:890.0px;font-size:25px;line-height:25px;color:#111;font-weight:normal;">대표</div>
<div class="t" style="left:1196px;top:894.8px;font-size:24.5px;line-height:24.5px;color:#111;font-weight:normal;letter-spacing:-0.1px">010-1234-8888</div>
<div class="t" style="left:1386px;width:232.79999999999995px;overflow:hidden;top:889.1px;font-size:26px;line-height:30px;color:#111;letter-spacing:-0.2px">&nbsp;brochicken8@naver</div>
<div class="t" style="left:1624px;top:892.1px;font-size:26px;line-height:26px;color:#111;font-weight:normal;">y</div>
<div class="t" style="left:1910px;top:892.1px;font-size:26px;line-height:26px;color:#111;font-weight:normal;">y</div>
<div class="t" style="left:57px;top:925.8px;font-size:25px;line-height:25px;color:#111;font-weight:normal;">브로치킨 청담점</div>
<svg style="left:582.6px;top:922.8px" width="10" height="10" viewBox="0 0 10 10"><polygon points="0,0 9,0 0,9" fill="#0f8f12"/></svg>
<div class="t" style="left:586px;top:927.4px;font-size:26px;line-height:26px;color:#111;font-weight:normal;letter-spacing:-0.9px">2639501234</div>
<div class="t" style="left:866px;top:925.8px;font-size:25px;line-height:25px;color:#111;font-weight:normal;letter-spacing:-0.5px">김민호</div>
<div class="t" style="left:1070px;top:924.8px;font-size:25px;line-height:25px;color:#111;font-weight:normal;">대표</div>
<div class="t" style="left:1196px;top:929.6px;font-size:24.5px;line-height:24.5px;color:#111;font-weight:normal;letter-spacing:-0.1px">010-1234-9999</div>
<div class="t" style="left:1386px;width:232.79999999999995px;overflow:hidden;top:923.9px;font-size:26px;line-height:30px;color:#111;letter-spacing:-0.2px">&nbsp;brochicken9@naver</div>
<div class="t" style="left:1624px;top:926.9px;font-size:26px;line-height:26px;color:#111;font-weight:normal;">y</div>
<div class="t" style="left:1910px;top:926.9px;font-size:26px;line-height:26px;color:#111;font-weight:normal;">y</div>
<div class="b" style="left:2199px;top:607.78px;width:8px;height:1.5px;background:#d4d4d4"></div>
<div class="b" style="left:2199px;top:642.56px;width:8px;height:1.5px;background:#d4d4d4"></div>
<div class="b" style="left:2199px;top:677.34px;width:8px;height:1.5px;background:#d4d4d4"></div>
<div class="b" style="left:2199px;top:712.12px;width:8px;height:1.5px;background:#d4d4d4"></div>
<div class="b" style="left:2199px;top:746.9px;width:8px;height:1.5px;background:#d4d4d4"></div>
<div class="b" style="left:2199px;top:781.6800000000001px;width:8px;height:1.5px;background:#d4d4d4"></div>
<div class="b" style="left:2199px;top:816.46px;width:8px;height:1.5px;background:#d4d4d4"></div>
<div class="b" style="left:2199px;top:851.24px;width:8px;height:1.5px;background:#d4d4d4"></div>
<div class="b" style="left:2199px;top:886.02px;width:8px;height:1.5px;background:#d4d4d4"></div>
<div class="b" style="left:2199px;top:920.8px;width:8px;height:1.5px;background:#d4d4d4"></div>
<div class="b" style="left:2199px;top:955.58px;width:8px;height:1.5px;background:#d4d4d4"></div>
<div class="b" style="left:2199px;top:990.36px;width:8px;height:1.5px;background:#d4d4d4"></div>
<div class="b" style="left:2199.7px;top:537px;width:7.300000000000182px;height:35.5px;background:#e6e6e6"></div>
<div class="b" style="left:52px;top:608px;width:2145.8px;height:76px;border:5px solid #ff0000"></div>
<div class="b" style="left:339px;top:692px;width:837px;height:61px;background:#fff"></div>
<div class="t" style="left:405px;top:701.4px;font-size:39px;line-height:39px;color:#ff0000;font-weight:normal;letter-spacing:-0.72px">직원이 여러명인 경우 행추가 후 등록합니다.</div>
<svg style="left:365px;top:711px" width="16" height="30" viewBox="0 0 16 30"><line x1="8" y1="1.5" x2="8" y2="29" stroke="#ff0000" stroke-width="2.2"/><polyline points="1.5,8.5 8,1.5 14.5,8.5" fill="none" stroke="#ff0000" stroke-width="2"/></svg>
<svg style="left:654px;top:531px" width="16" height="34" viewBox="0 0 16 34"><line x1="8" y1="0" x2="8" y2="22" stroke="#ff0000" stroke-width="2.2"/><polygon points="2,19.5 14,19.5 8,32.4" fill="#ff0000"/></svg>
<svg style="left:2073px;top:530px" width="16" height="34" viewBox="0 0 16 34"><line x1="8" y1="10" x2="8" y2="33" stroke="#ff0000" stroke-width="2.2"/><polygon points="2,13.3 14,13.3 8,0.4" fill="#ff0000"/></svg>
</body></html>
